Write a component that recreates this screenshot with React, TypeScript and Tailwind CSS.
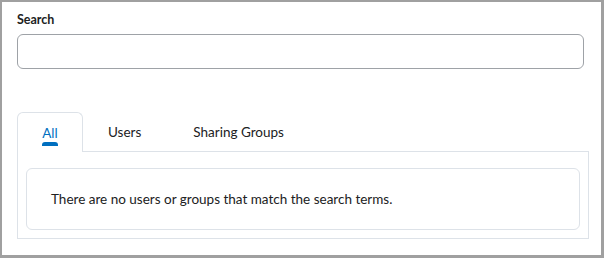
import React from "react";

export default function App() {
  return (
    <div
      className="w-[604px] h-[258px] bg-white border-l-2 border-t-2 border-r-[3px] border-b-[3px] border-[#a0a0a0] pl-[15px] pr-[18px] pt-[10px]"
      style={{ fontFamily: "Lato, 'Open Sans', sans-serif" }}
    >
      <div className="text-[12.5px] leading-[16px] font-bold text-[#202122]">Search</div>
      <div className="mt-[6px] h-[35px] w-[567px] rounded-[6px] border border-[#9ea2a7] bg-white" />
      <div className="mt-[43px] w-[572px]">
        <div className="flex items-end h-[40px]">
          <div className="relative h-[40px] w-[66px] rounded-t-[6px] border border-b-0 border-[#dde2e8] flex items-start justify-center pt-[11px]">
            <span className="text-[13.5px] leading-[18px] text-[#006fbf]">All</span>
            <span className="absolute left-1/2 -translate-x-1/2 top-[29px] h-[4px] w-[16px] rounded-t-[3px] bg-[#006fbf]" />
          </div>
          <div className="flex-1 h-[40px] border-b border-[#dde2e8] flex items-start pt-[11px]">
            <span className="ml-[25px] text-[13.5px] leading-[18px] text-[#202122]">Users</span>
            <span className="ml-[52px] text-[13.5px] leading-[18px] text-[#202122]">Sharing Groups</span>
          </div>
        </div>
        <div className="border-x border-b border-[#dde2e8] pt-[16px] px-[8px] pb-[8px]">
          <div className="h-[62px] rounded-[6px] border border-[#dde2e8] flex items-center pl-[24px]">
            <span className="text-[13.5px] leading-[18px] text-[#202122]">
              There are no users or groups that match the search terms.
            </span>
          </div>
        </div>
      </div>
    </div>
  );
}
